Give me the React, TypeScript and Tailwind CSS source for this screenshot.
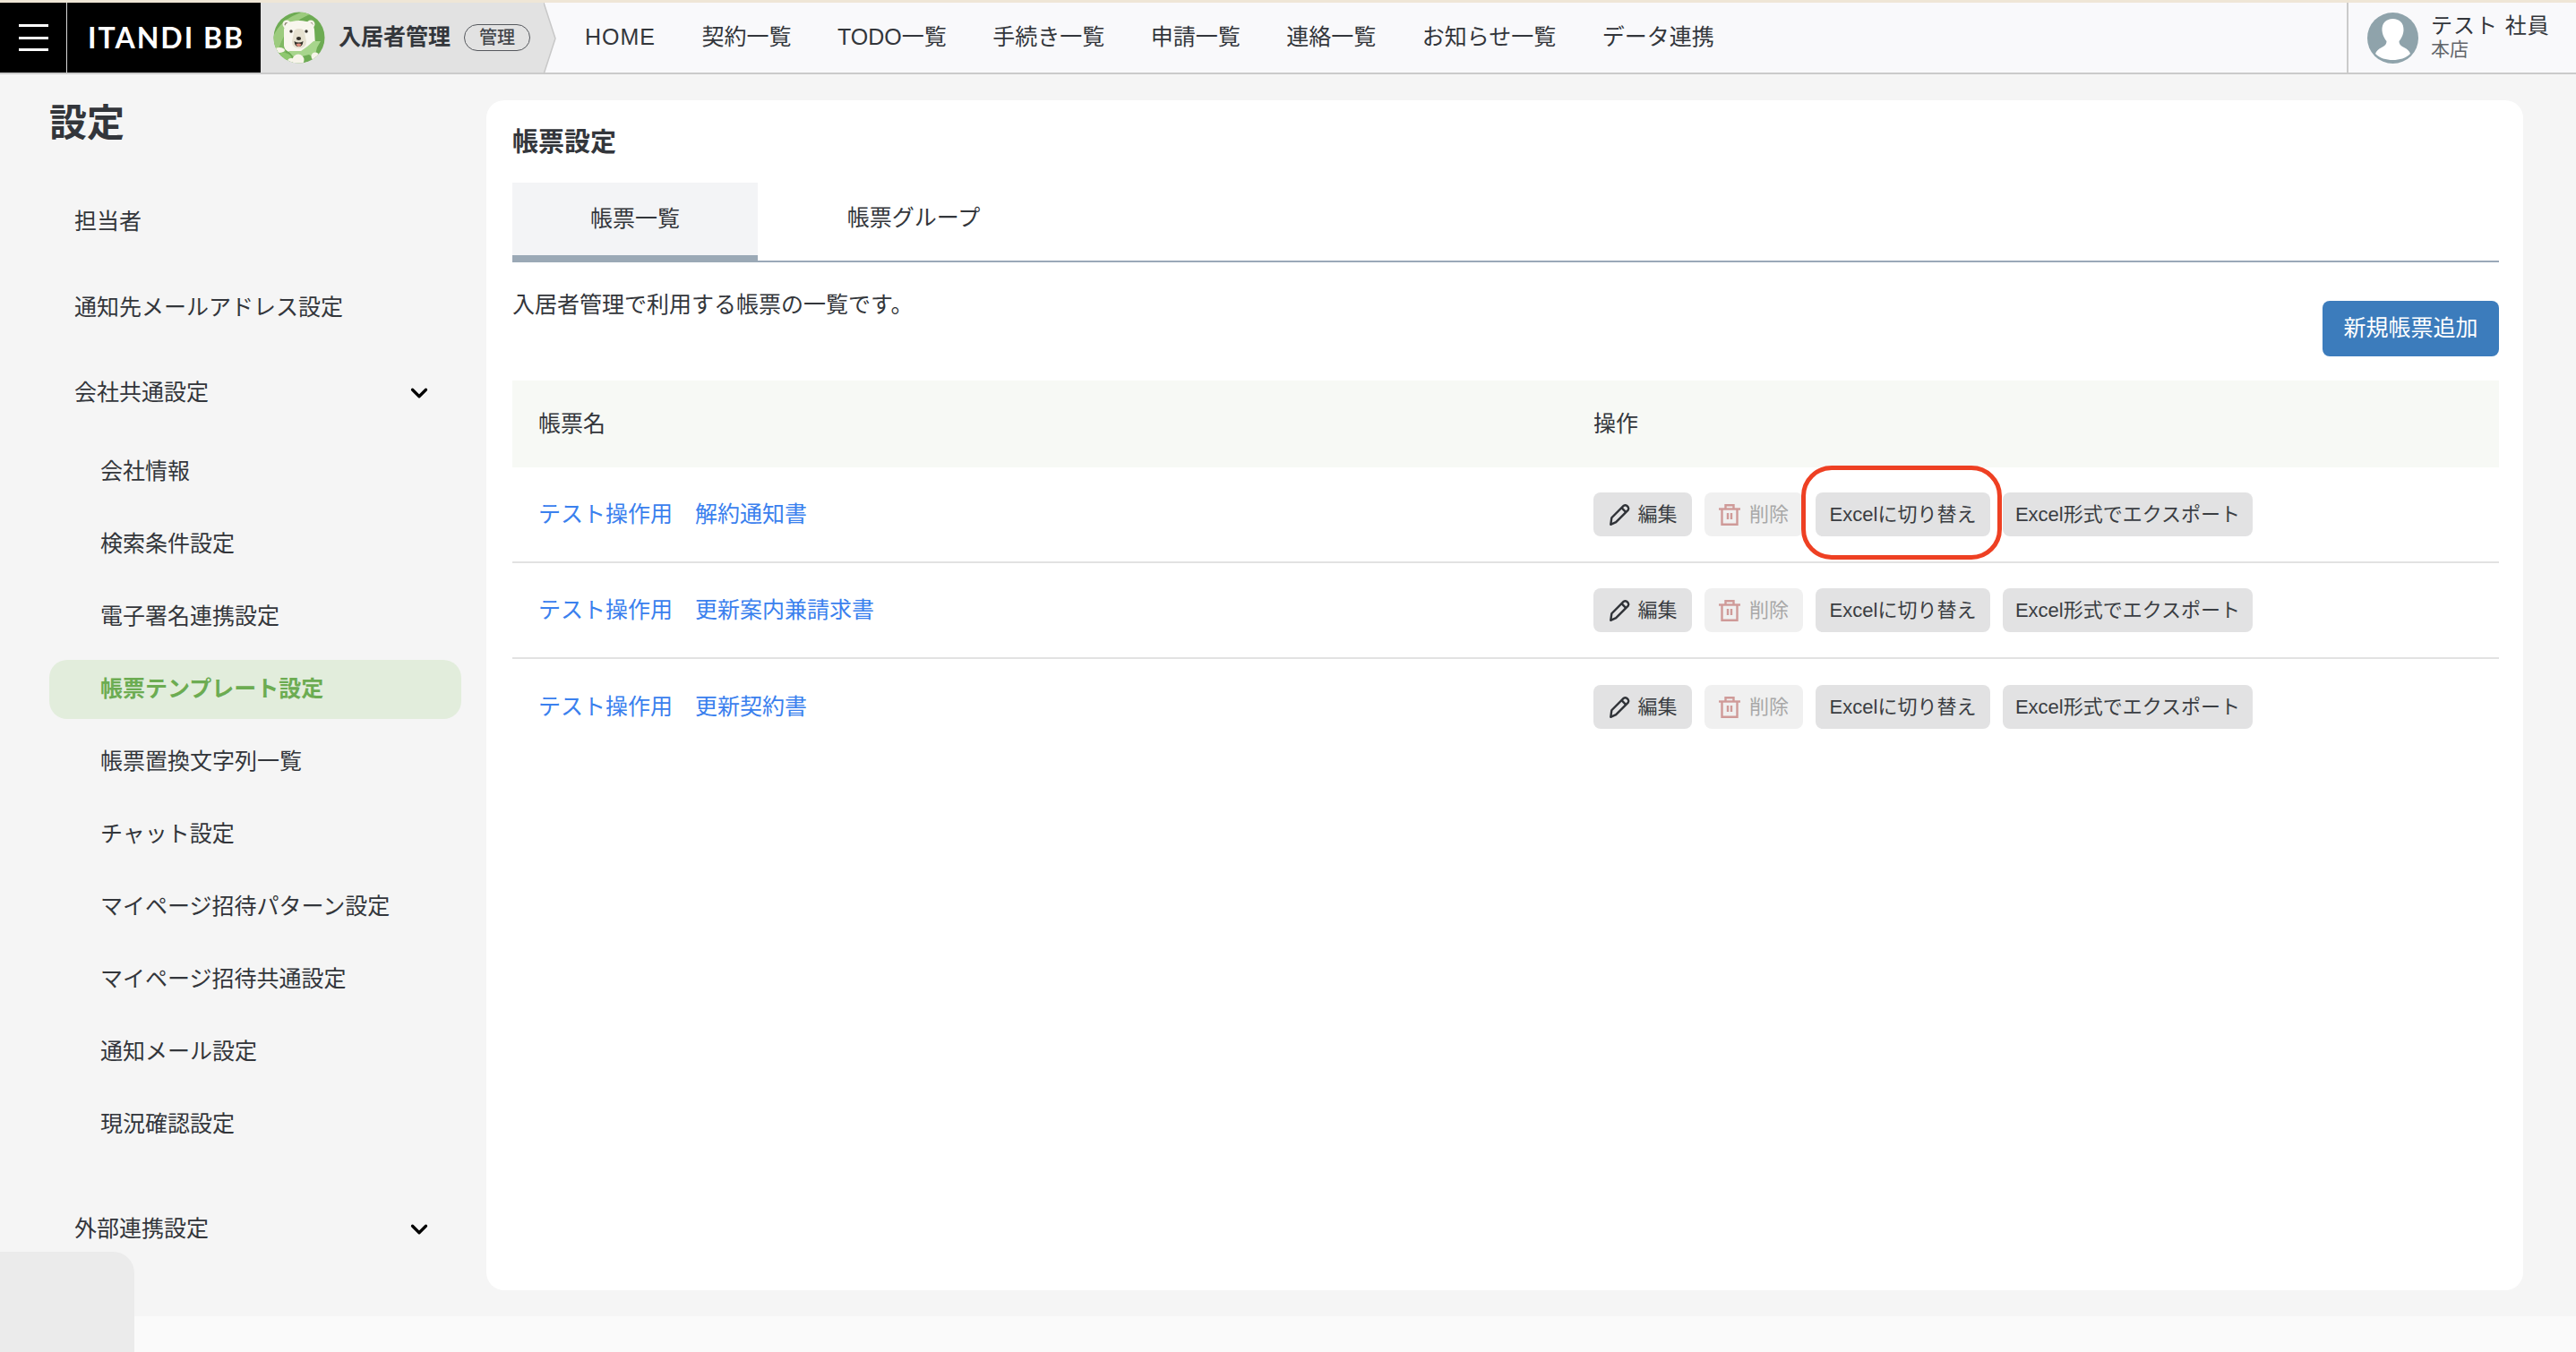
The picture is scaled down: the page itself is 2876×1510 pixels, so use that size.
import React from "react";
import { ChevronDown } from "lucide-react";

const navItems = ["HOME", "契約一覧", "TODO一覧", "手続き一覧", "申請一覧", "連絡一覧", "お知らせ一覧", "データ連携"];

const subItems = [
  "会社情報",
  "検索条件設定",
  "電子署名連携設定",
  "帳票テンプレート設定",
  "帳票置換文字列一覧",
  "チャット設定",
  "マイページ招待パターン設定",
  "マイページ招待共通設定",
  "通知メール設定",
  "現況確認設定",
];

const rows = ["テスト操作用　解約通知書", "テスト操作用　更新案内兼請求書", "テスト操作用　更新契約書"];

const BearLogo = () => (
  <svg viewBox="0 0 58 58" className="w-[58px] h-[58px] shrink-0">
    <defs>
      <clipPath id="bear-clip">
        <circle cx="29" cy="29" r="28.5" />
      </clipPath>
    </defs>
    <g clipPath="url(#bear-clip)">
      <rect width="58" height="58" fill="#6dab53" />
      <path d="M0 44 L0 28 Q8 8 34 0 L44 2 Q18 10 6 42 Z" fill="#9ccb7e" />
      <path d="M0 44 L6 42 Q10 30 14 24 L14 50 L0 54 Z" fill="#7fb862" />
      <circle cx="15" cy="14" r="4.5" fill="#f7f4ea" />
      <circle cx="42" cy="14" r="4.5" fill="#f7f4ea" />
      <circle cx="15" cy="14.500" r="2.4" fill="#8a8270" />
      <circle cx="42" cy="14.500" r="2.4" fill="#8a8270" />
      <path d="M12 20 Q13 11 21 11 Q29 9 37 11 Q45 11 46 20 L47 38 Q46 47 30 47 Q13 47 12 38 Z" fill="#f8f6ee" />
      <path d="M23 24 Q23 19 29 19 Q35 19 35 24 L37 33 Q37 41 29 41 Q21 41 21 33 Z" fill="#e6e1d0" />
      <circle cx="20" cy="22" r="1.7" fill="#33302a" />
      <circle cx="37" cy="22" r="1.7" fill="#33302a" />
      <ellipse cx="28.500" cy="30" rx="2.600" ry="1.900" fill="#33302a" />
      <path d="M23.500 33 Q28.500 36 33.500 33 Q33 39 28.500 39 Q24 39 23.500 33 Z" fill="#33302a" />
      <path d="M25.500 36.500 Q28.500 34.500 31.500 36.500 Q30.500 39 28.500 39 Q26.500 39 25.500 36.500 Z" fill="#e08f80" />
      <path d="M17 44 L31 44 L38 39 L45 33 L53 33 L49 40 L46 52 L40 48 L24 52 Z" fill="#a7d58c" />
      <ellipse cx="7" cy="43" rx="6" ry="3" fill="#f7f4ea" />
      <path d="M8 46 Q16 45 20 50 L24 58 L4 58 Z" fill="#8ec86f" />
      <circle cx="28" cy="54" r="6.500" fill="#f7f4ea" />
      <circle cx="20" cy="56" r="4" fill="#f7f4ea" />
      <circle cx="47" cy="50" r="4.500" fill="#f7f4ea" />
    </g>
  </svg>
);

const UserAvatar = () => (
  <svg viewBox="0 0 57 57" className="w-[57px] h-[57px] shrink-0">
    <circle cx="28.5" cy="28.5" r="28.5" fill="#8fa3ab" />
    <path d="M28.5 7 C36 7 41 12 40.5 20 C40 26 37 30 35.500 32 C35.500 35 37 37 41 39 C45 41 47 43 48 46 C43 51 36 53 28.5 53 C21 53 14 51 9 46 C10 43 12 41 16 39 C20 37 21.500 35 21.500 32 C20 30 17 26 16.500 20 C16 12 21 7 28.5 7 Z" fill="#fff" />
  </svg>
);

const PencilIcon = () => (
  <svg viewBox="0 0 24 24" className="w-[26px] h-[26px]" fill="none" stroke="#2f3237" strokeWidth="2.2" strokeLinejoin="round">
    <path d="M3 22 L4 15 L16.500 2.500 Q18 1.500 19.500 2.500 L21 4 Q22 5.500 21 7 L8.500 19.500 Z" />
    <path d="M14.500 5 L19 9.500" />
  </svg>
);

const TrashIcon = () => (
  <svg viewBox="0 0 24 24" className="w-[24px] h-[24px]" fill="none" stroke="#cf9a98" strokeWidth="2.4">
    <path d="M0 5.500 H24" />
    <path d="M7.500 5.500 V1.200 H16.500 V5.500" />
    <path d="M3.500 5.500 V22.800 H20.500 V5.500" />
    <path d="M10 10 V17 M14 10 V17" />
  </svg>
);

const SideTop = ({ label, chevron }: { label: string; chevron?: boolean }) => (
  <div className="h-[66px] flex items-center justify-between pl-[28px] pr-[32px] text-[25px] text-[#33363b]">
    <span>{label}</span>
    {chevron && <ChevronDown className="w-[30px] h-[30px] text-black" strokeWidth={2.6} />}
  </div>
);

const ActionButton = ({ children, width }: { children: React.ReactNode; width: string }) => (
  <button className={`h-[49px] rounded-[8px] bg-[#e2e2e3] text-[22px] text-[#3a3d42] flex items-center justify-center whitespace-nowrap ${width}`}>
    {children}
  </button>
);

const App = () => {
  return (
    <div
      className="w-[2876px] h-[1510px] overflow-hidden relative bg-[#f5f5f5] flex flex-col"
      style={{ fontFamily: '"Liberation Sans", "Noto Sans CJK JP", sans-serif' }}
    >
      <div className="h-[3px] bg-[#efe6d6] shrink-0" />
      <header className="h-[80px] shrink-0 flex bg-[#f9f9fb] border-b-2 border-[#cbcbcb]">
        <div className="w-[75px] bg-black flex items-center justify-center border-r border-[#d8d8d8]">
          <div className="w-[33px] flex flex-col gap-[10.5px]">
            <div className="h-[3px] bg-white" />
            <div className="h-[3px] bg-white" />
            <div className="h-[3px] bg-white" />
          </div>
        </div>
        <div className="w-[216px] bg-black flex items-center pl-[23px]">
          <span className="text-white text-[32px] font-bold tracking-[2px]" style={{ fontFamily: "Lato, sans-serif" }}>
            ITANDI BB
          </span>
        </div>
        <div className="w-[316px] bg-[#e2e2e2] flex items-center pl-[14px] relative">
          <BearLogo />
          <span className="ml-[15px] text-[25px] font-bold text-[#33363b] whitespace-nowrap">入居者管理</span>
          <span className="ml-[15px] h-[30px] w-[74px] rounded-full border border-[#55585d] text-[20px] font-medium text-[#44474c] flex items-center justify-center">
            管理
          </span>
          <svg viewBox="0 0 14 80" className="absolute left-full top-0 w-[14px] h-[80px] z-10">
            <path d="M0 0 L13 40 L0 80 Z" fill="#e2e2e2" />
            <path d="M0 0 L13 40 L0 80" fill="none" stroke="#c8c8c8" strokeWidth="1.500" />
          </svg>
        </div>
        <nav className="flex items-center pl-[46px] gap-[51.5px] text-[25px] text-[#33363b] whitespace-nowrap">
          {navItems.map((n) => (
            <span key={n} className={n === "HOME" ? "tracking-[1px]" : ""}>
              {n}
            </span>
          ))}
        </nav>
        <div className="ml-auto w-[256px] h-full border-l-2 border-[#cbcbcb] flex items-center pl-[21px]">
          <UserAvatar />
          <div className="ml-[14px] flex flex-col mt-[-4px]">
            <span className="text-[24px] leading-[30px] text-[#33363b] tracking-[1px]">テスト 社員</span>
            <span className="text-[21px] leading-[22px] text-[#62656a]">本店</span>
          </div>
        </div>
      </header>

      <div className="flex-1 flex min-h-0">
        <aside className="w-[543px] shrink-0 pl-[55px] pr-[28px]">
          <h1 className="text-[42px] leading-[58px] font-bold text-[#33363b] mt-[26px]">設定</h1>
          <div className="mt-[48px] flex flex-col">
            <SideTop label="担当者" />
            <div className="h-[30px]" />
            <SideTop label="通知先メールアドレス設定" />
            <div className="h-[29px]" />
            <SideTop label="会社共通設定" chevron />
            <div className="h-[22px]" />
            <div className="flex flex-col gap-[15px]">
              {subItems.map((s) => (
                <div
                  key={s}
                  className={
                    s === "帳票テンプレート設定"
                      ? "h-[66px] flex items-center pl-[57px] rounded-[20px] bg-[#e2eddc] text-[25px] font-bold text-[#6cac52]"
                      : "h-[66px] flex items-center pl-[57px] text-[25px] text-[#33363b]"
                  }
                >
                  {s}
                </div>
              ))}
            </div>
            <div className="h-[51px]" />
            <SideTop label="外部連携設定" chevron />
          </div>
        </aside>

        <main className="w-[2274px] h-[1329px] mt-[29px] rounded-[20px] bg-white pl-[29px] pr-[27px]">
          <h2 className="text-[29px] leading-[40px] font-bold text-[#33363b] mt-[28px] relative top-[-1px]">帳票設定</h2>
          <div className="mt-[24px] flex border-b-2 border-[#9aa8b8] h-[89px]">
            <div className="w-[274px] h-[89px] bg-[#f3f4f6] border-b-[8px] border-[#9ba9b6] flex items-center justify-center text-[25px] text-[#33363b]">
              帳票一覧
            </div>
            <div className="w-[274px] ml-[37px] h-[87px] flex items-center justify-center text-[25px] text-[#33363b] pb-[8px]">
              帳票グループ
            </div>
          </div>
          <div className="flex justify-between items-start mt-[43px] h-[62px]">
            <p className="text-[25px] leading-[8px] text-[#33363b]">入居者管理で利用する帳票の一覧です。</p>
            <button className="w-[197px] h-[62px] rounded-[8px] bg-[#3c7cbc] text-white text-[25px] flex items-center justify-center">
              新規帳票追加
            </button>
          </div>

          <div className="mt-[27px]">
            <div className="h-[97px] bg-[#f7f9f5] flex items-center text-[25px] text-[#33363b]">
              <div className="w-[1207px] pl-[29px]">帳票名</div>
              <div>操作</div>
            </div>
            {rows.map((r, i) => (
              <div
                key={r}
                className={`flex items-center ${i === 2 ? "h-[107px]" : "h-[107px] border-b-2 border-[#e2e2e2]"}`}
              >
                <div className="w-[1207px] pl-[29px] text-[25px] text-[#3a80ee]">{r}</div>
                <div className="flex gap-[14px]">
                  <ActionButton width="w-[110px] gap-[7px]">
                    <PencilIcon />
                    <span>編集</span>
                  </ActionButton>
                  <button className="w-[110px] h-[49px] rounded-[8px] bg-[#f0f0f0] text-[22px] text-[#a8a8a8] flex items-center justify-center gap-[10px]">
                    <TrashIcon />
                    <span>削除</span>
                  </button>
                  <div className="relative">
                    <ActionButton width="w-[195px]">Excelに切り替え</ActionButton>
                    {i === 0 && (
                      <div className="absolute left-[-16px] right-[-13px] top-[-30px] bottom-[-26px] rounded-[34px] border-[5px] border-[#ee4023]" />
                    )}
                  </div>
                  <ActionButton width="w-[279px]">Excel形式でエクスポート</ActionButton>
                </div>
              </div>
            ))}
          </div>
        </main>
      </div>

      <div className="absolute left-0 right-0 bottom-0 h-[40px] bg-[#fafafa]" />
      <div className="absolute left-0 bottom-0 w-[150px] h-[112px] bg-[#ebebeb] rounded-tr-[24px]" />
    </div>
  );
};

export default App;
